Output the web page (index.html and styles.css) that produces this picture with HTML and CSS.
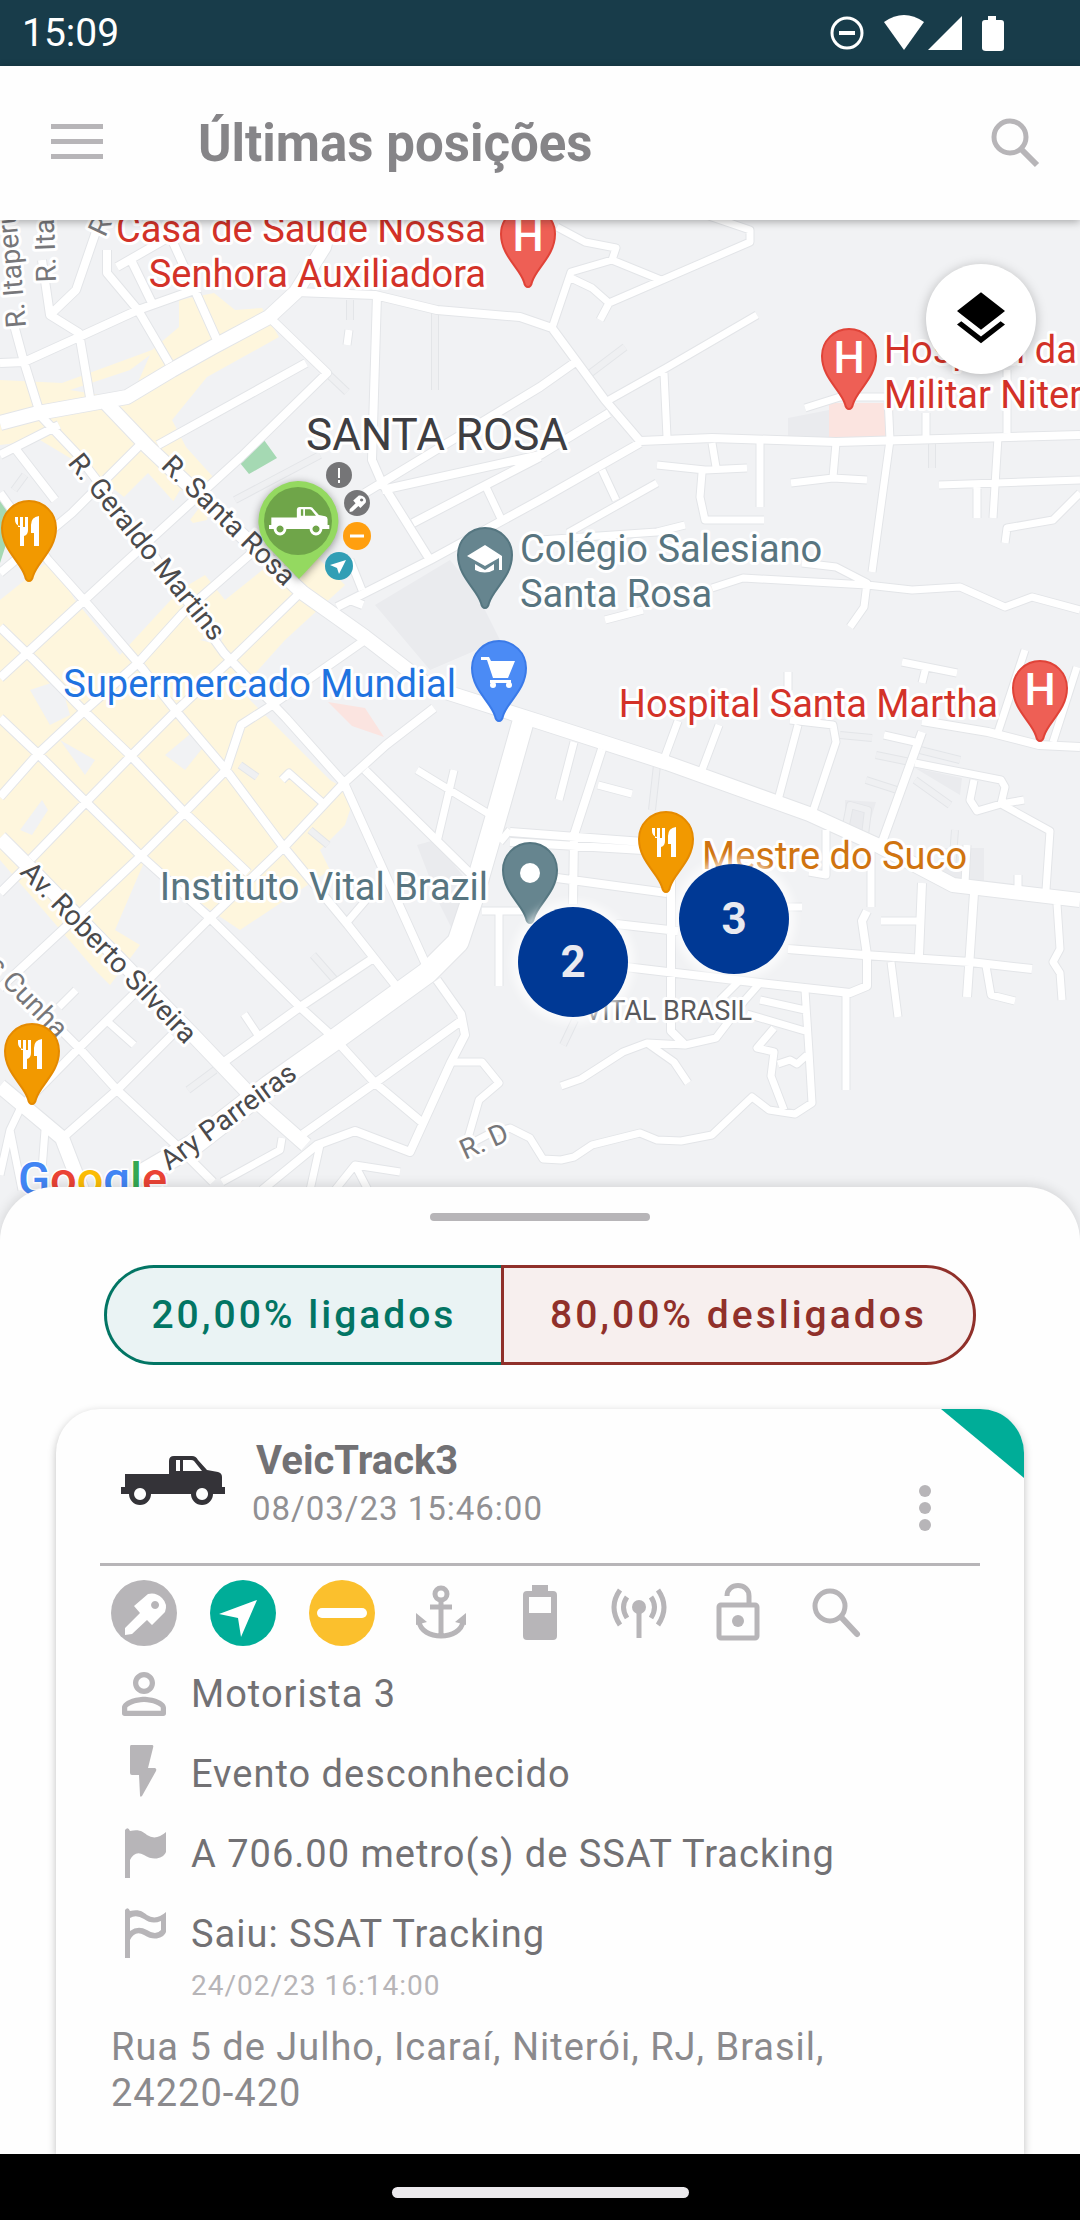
FILE: index.html
```html
<!DOCTYPE html>
<html lang="pt-BR">

<head>
    <meta charset="UTF-8">
    <meta name="viewport" content="width=device-width, initial-scale=1.0">
    <title>Últimas posições</title>
    <link rel="stylesheet" href="styles.css">
</head>

<body>
    <!-- Status bar -->
    <div class="status-bar">
        <span>15:09</span>
        <svg class="status-icons" viewBox="0 0 180 40" aria-hidden="true">
            <circle cx="17" cy="20" r="15" fill="none" stroke="#fff" stroke-width="3" />
            <path d="M9 18h16v4H9z" />
            <path d="M54 9Q74-5 94 9L74 37z" />
            <path d="M98 37L132 3V37z" />
            <path d="M158 3h8v4h5q3 0 3 3v25q0 3-3 3h-15q-4 0-4-3V10q0-3 3-3h3z" />
        </svg>
    </div>

    <!-- App bar -->
    <header class="app-bar">
        <button class="icon-btn" aria-label="Menu">
            <svg width="54" height="54" viewBox="0 0 54 54"><path d="M1 8h52v5H1zM1 23h52v5H1zM1 38h52v5H1z" /></svg>
        </button>
        <h1>Últimas posições</h1>
        <button class="icon-btn" aria-label="Buscar">
            <svg width="54" height="54" viewBox="0 0 54 54"><g fill="none" stroke="#b7b5b8" stroke-width="5"><circle cx="21" cy="21" r="16" /><path d="M32 33l16 16" stroke-width="6" /></g></svg>
        </button>
    </header>

    <!-- Map -->
    <main class="map">
        <svg class="map-canvas" viewBox="0 220 1080 1027" preserveAspectRatio="xMinYMin slice">
            <defs>
                <path id="road-xl" d="M525 715L499 807 472 900 458 942 427 973 337 1038 269 1086 193 1145 140 1176" />
                <path id="road-l" d="M0 423L38 413 127 397 172 370 213 347 269 317 296 292 324 247 332 215M105 402L148 447 303 593 365 637 430 687 540 722 667 763 809 814 877 845 953 885 1080 900M0 838L28 866 193 1035 255 1100 306 1145M0 1086L62 1138 84 1195M14 1200" />
                <path id="road-m" d="M296 292L375 295 437 310 520 317 552 328 605 400 640 441 712 438 836 442 1080 435M0 363L24 362 79 337 138 310 200 288M14 325L24 362 38 407M42 260L50 315 79 333 91 403M100 220L76 290 50 315M107 250V273L138 310 169 363M117 267L185 228M131 260L152 303M172 240L196 293 217 340M269 317L327 373 241 457 117 570 0 678M306 363L158 445M38 413L76 453 150 550 224 653 286 718 344 783 427 967M59 425L0 455M145 440L72 513 0 573M14 447L55 500M0 493L48 560 90 607 138 663 176 711 226 770 282 845 348 925 396 986M0 627L34 660 84 711 131 756 183 811 248 873M0 718L38 754 86 802 141 856 210 918 300 1007 334 1038 375 1083 424 1124M0 797L38 754 84 711 138 663 183 613 255 550M31 859L86 802 131 756 176 711 234 657 303 590M0 893L24 869M0 988L69 924 141 856 186 811 226 770 241 725 269 707 365 640M21 1107L79 1048 148 980 207 921 286 845 344 783 386 745 434 708M59 1141L117 1090 172 1035M45 1014L79 1048 117 1090 176 1145 213 1182M224 1062L300 1007 372 959M365 770L482 885M303 1134L375 1083 461 1021M437 980L461 1014 465 1035 451 1062 410 1152 355 1131 317 1145 262 1190M377 295L372 460 382 483 430 560 337 607M365 493L540 387 574 363M382 490L540 455 609 413M413 523L482 487 540 457M430 560L540 500 640 443M350 600L363 605M602 749L574 835 573 904M510 832L643 842M510 842L643 850M557 878L667 893M616 924L678 931M788 949L864 955 970 962 1032 969M600 964L760 983 850 993 867 986 867 955 862 921 867 911M671 880V1031L685 1045M922 732L881 845M922 721L988 732 1039 745 1080 747M922 883L919 955M974 893L967 997" />
                <path id="road-s" d="M107 1021L134 1045M59 1007L76 990M244 1014L258 1035M417 770L489 814M454 770L437 842M282 780L289 773 324 804M348 921L372 893M451 1062H482L499 1083 479 1100 468 1138M282 1138L280 1150 222 1182M320 1145L310 1190M335 1190L355 1165 400 1172M355 1165L368 1190M0 1175L10 1130 21 1107M10 1130L22 1190M45 1130L42 1170M499 914V986M482 911H523M510 830L500 842M574 742L559 800M598 785L632 794M678 721L664 759M719 725L702 770M798 725L778 800M790 720L833 725 836 742 812 814M884 735L915 742M1025 650L998 732M1077 667L1053 742M915 763L1001 780 1005 787 1001 804 977 811 970 800 974 780M1001 804L1050 831 1046 890M1001 804L1024 800M1057 904L1060 949 1053 962 1060 973 1062 1000M967 845L965 883M1018 875V890M871 845V907M826 830V875L809 872M788 907H802M881 921H919M891 962L898 1017M846 993V1090M986 966L991 995 1015 1001M561 1086L581 1079 623 1052 647 1043 685 1045 716 1038 729 1021 745 1000 760 983M647 1043L674 1062 688 1083M805 990L809 1052 812 1103 795 1114 769 1110 752 1097 712 1135 681 1141 657 1140 640 1133 592 1145 574 1157 561 1160 543 1159 530 1138 510 1128 489 1134 468 1145M774 1028L757 1048 774 1052 771 1076 784 1110M778 1064L790 1060 797 1064 807 1055M747 1014L805 1031M760 1000L805 1010M720 1000L740 980M557 227L585 242 616 248 612 260 571 272 552 328M612 260L661 280M571 278L592 288 609 303 600 320M609 303L750 242V230L709 216M757 315L666 368 609 400M486 487L503 523M664 373L667 437M712 443L716 467M657 465L705 470 747 468M702 473L700 497 705 520 764 520M760 443V507M836 443L833 477M791 483L833 478 867 480M888 397L890 440 872 572M805 408L840 397H888M926 413V437M1007 370V433M998 437L993 518M939 485L1080 480M977 487V518M1005 543L1007 528 1053 520 1080 493M712 588L743 578 867 585 912 590 960 587 1005 607 1032 597 1080 610M802 563L836 567 867 583 864 607 850 627M605 620L643 610M602 470L616 500M568 533L657 483M540 540L657 532 685 525M902 662L957 673M926 667L922 683M788 672V690M349 330L347 345M350 560L362 590" />
                <path id="lane" d="M350 300V320M435 310V390M327 373L347 392M588 375L625 347M932 443V468M235 500L320 455M188 1090L215 1070M313 955L335 980M310 830L328 845M240 765L257 777M840 735L872 738M876 755L910 762M866 780L897 790M920 750L960 760M915 780L950 805M657 765L652 810M955 830L952 870M845 830L850 805 868 810 865 835M563 1045L575 1020M14 490L25 475" />
                <path id="pin" d="M0 53Q-3 53-4 48C-8 34-27 22-27 0A27 27 0 0 1 27 0C27 22 8 34 4 48Q3 53 0 53Z" />
                <path id="food" d="M-14-14h3v10h2v-10h3v10h2v-10h3v13q0 5-4 6V15h-4V-5q-5-1-5-6zM10-15V15H5V2H2V-6Q2-14 10-15z" />
                <path id="key" fill-rule="evenodd" d="M23 26L37 14Q45 12 51 18Q57 24 54 32L41 45 36 40 21 54 14 55V48L29 33ZM44 21a4 4 0 1 0 .1 0Z" />
                <path id="truck" fill-rule="evenodd" d="M4 18H48V5q0-5 5-5H71q4 0 6 4L86 14 97 16q4 1 4 5V31h3v7H92a11 11 0 0 1-22 0H30a11 11 0 0 1-22 0H0V31h4zM55 4V15h4V4zM62 4V15H81L73 5q-1-1-3-1zM19 32a6 6 0 1 0 .1 0zM81 32a6 6 0 1 0 .1 0z" />
            </defs>

            <!-- areas -->
            <path class="area-shop" d="M0 380L62 383 152 350 179 327V300L214 293 235 310 262 308 279 337 207 377 172 420 186 447 213 477 207 520 193 523 148 473 124 497 90 470 40 440 0 445ZM0 600L50 560 75 600 120 655 180 590 205 575 225 600 300 540 345 585 285 640 240 690 330 780 355 795 345 825 320 850 330 870 240 930 210 910 145 860 115 930 140 945 110 985 95 970 0 860Z" />
            <path class="area-plain" d="M30 690L60 680 70 715 50 725ZM60 740L95 760 85 775ZM165 755L195 730 205 745 185 770ZM20 830L42 800 48 810 32 835ZM200 640L225 630 220 645ZM180 490L205 500 160 560 150 540ZM70 390L130 370 150 355 130 400Z" />
            <path class="area-park" d="M240 463L264 440 277 458 249 474ZM0 493L15 517 0 563Z" />
            <path class="area-campus" d="M375 605L450 560 475 590 500 640 430 670ZM417 845L435 840 470 885 455 935 440 905ZM788 418L829 410V437H788ZM942 848H984V885H940ZM845 800L876 802 865 838 845 825ZM915 768L962 778 960 795Z" />
            <path class="area-health" d="M328 702L365 708 384 737 352 726ZM829 403H884L886 437H829Z" />

            <use href="#lane" class="casing lane-w" />
            <use href="#lane" class="lane lane-w" />
            <use href="#road-s" class="casing s-w" />
            <use href="#road-m" class="casing m-w" />
            <use href="#road-l" class="casing l-w" />
            <use href="#road-xl" class="casing xl-w" />
            <use href="#road-s" class="road s-w" />
            <use href="#road-m" class="road m-w" />
            <use href="#road-l" class="road l-w" />
            <use href="#road-xl" class="road xl-w" />

            <!-- street names -->
            <g class="street">
                <text transform="translate(67 463) rotate(51)">R. Geraldo Martins</text>
                <text transform="translate(160 467) rotate(44)">R. Santa Rosa</text>
                <text transform="translate(19 873) rotate(46)">Av. Roberto Silveira</text>
                <text transform="translate(169 1171) rotate(-36)">Ary Parreiras</text>
            </g>
            <g class="street minor">
                <text transform="translate(26 327) rotate(-95)">R. Itaperuna</text>
                <text transform="translate(56 282) rotate(-92)">R. Itaocara</text>
                <text transform="translate(105 238) rotate(-65)">R.</text>
                <text transform="translate(-14 967) rotate(46)">s Cunha</text>
                <text transform="translate(465 1160) rotate(-24)">R. D</text>
            </g>

            <!-- places -->
            <g class="place red">
                <text x="486" y="242" text-anchor="end">Casa de Saúde Nossa</text>
                <text x="486" y="287" text-anchor="end">Senhora Auxiliadora</text>
                <text x="884" y="363">Hospital da</text>
                <text x="884" y="408">Militar Niterói</text>
                <text x="998" y="717" text-anchor="end">Hospital Santa Martha</text>
            </g>
            <g class="place slate">
                <text x="520" y="562">Colégio Salesiano</text>
                <text x="520" y="607">Santa Rosa</text>
                <text x="488" y="900" text-anchor="end">Instituto Vital Brazil</text>
            </g>
            <text class="place blue" x="456" y="697" text-anchor="end">Supermercado Mundial</text>
            <text class="place orange" x="702" y="869">Mestre do Suco</text>
            <text class="place district" x="306" y="450">SANTA ROSA</text>
            <text class="place area-name" x="585" y="1020">VITAL BRASIL</text>

            <!-- pins -->
            <g fill="#ee5f55" stroke="#e04338" stroke-width="2">
                <use href="#pin" x="528" y="234" />
                <use href="#pin" x="849" y="356" />
                <use href="#pin" x="1040" y="688" />
            </g>
            <g class="pin-letter">
                <text x="528" y="251">H</text>
                <text x="849" y="373">H</text>
                <text x="1040" y="705">H</text>
            </g>
            <g fill="#f29900" stroke="#e58a00" stroke-width="2">
                <use href="#pin" x="29" y="528" />
                <use href="#pin" x="32" y="1051" />
                <use href="#pin" x="666" y="839" />
            </g>
            <g fill="#fff">
                <use href="#food" x="29" y="531" />
                <use href="#food" x="32" y="1054" />
                <use href="#food" x="666" y="842" />
            </g>
            <g fill="#66858f" stroke="#557680" stroke-width="2">
                <use href="#pin" x="485" y="555" />
                <use href="#pin" x="530" y="870" />
            </g>
            <circle cx="530" cy="873" r="10" fill="#fff" />
            <path fill="#fff" d="M467 556L485 545 502 556V570H499V558L485 566ZM475 564L485 570 494 564V570Q485 575 475 570Z" />
            <use href="#pin" x="499" y="668" fill="#4b8bf5" stroke="#3a7ae8" stroke-width="2" />
            <path fill="#fff" d="M481 657H489L491 661H515L508 678H493L487 660H481ZM490 680H511V683H490Z" />
            <circle cx="493" cy="685" r="3" fill="#fff" />
            <circle cx="509" cy="685" r="3" fill="#fff" />

            <!-- vehicle -->
            <path class="vehicle-pin" d="M299 579L273 552A40 40 0 1 1 325 551Z" />
            <circle cx="298" cy="521" r="34" fill="#6fa549" />
            <use href="#truck" fill="#fff" transform="translate(269 507) scale(.58)" />
            <g>
                <circle cx="339" cy="475" r="13" fill="#757577" />
                <path d="M339 468V478M339 480V483" stroke="#fff" stroke-width="2" />
                <circle cx="357" cy="503" r="13" fill="#757577" />
                <use href="#key" fill="#fff" transform="translate(344 490) scale(.4)" />
                <circle cx="357" cy="536" r="14" fill="#ff9f0f" />
                <path d="M350 536H364" stroke="#fff" stroke-width="3" />
                <circle cx="339" cy="566" r="14" fill="#319eb5" />
                <path d="M346 560L339 574 337 568 330 565Z" fill="#fff" />
            </g>

            <text class="google" x="18" y="1195"><tspan fill="#4285f4">G</tspan><tspan fill="#ea4335">o</tspan><tspan fill="#fbbc05">o</tspan><tspan fill="#4285f4">g</tspan><tspan fill="#34a853">l</tspan><tspan fill="#ea4335">e</tspan></text>
        </svg>

        <button class="layers-btn" aria-label="Camadas">
            <svg width="64" height="64" viewBox="0 0 24 24"><path d="M11.99 18.54l-7.37-5.73L3 14.07l9 7 9-7-1.63-1.27-7.38 5.74zM12 16l7.36-5.73L21 9l-9-7-9 7 1.63 1.27L12 16z" /></svg>
        </button>
        <button class="cluster cluster-2">2</button>
        <button class="cluster cluster-3">3</button>
    </main>

    <!-- Bottom sheet -->
    <section class="sheet">
        <div class="handle"></div>

        <div class="totals">
            <button class="total on">20,00% ligados</button>
            <button class="total off">80,00% desligados</button>
        </div>

        <article class="card">
            <div class="corner"></div>
            <div class="card-header">
                <svg class="truck" width="104" height="50" viewBox="0 0 104 50"><use href="#truck" /></svg>
                <div class="vehicle">
                    <h2>VeicTrack3</h2>
                    <time>08/03/23 15:46:00</time>
                </div>
                <button class="more" aria-label="Mais opções">
                    <svg width="12" height="46" viewBox="0 0 12 46"><circle cx="6" cy="6" r="6" /><circle cx="6" cy="23" r="6" /><circle cx="6" cy="40" r="6" /></svg>
                </button>
            </div>

            <div class="states">
                <svg viewBox="0 0 66 66"><circle cx="33" cy="33" r="33" /><use href="#key" fill="#fff" /></svg>
                <svg viewBox="0 0 66 66"><circle cx="33" cy="33" r="33" fill="#00ad98" /><path fill="#fff" d="M47 20L31 57 28 38 9 34Z" /></svg>
                <svg viewBox="0 0 66 66"><circle cx="33" cy="33" r="33" fill="#fbc02d" /><rect x="8" y="28" width="50" height="10" rx="5" fill="#fff" /></svg>
                <svg viewBox="0 0 66 66"><g fill="none" stroke="#b7b5b8" stroke-width="5"><circle cx="33" cy="14" r="6" /><path d="M33 20V57M22 27H44M11 41C13 61 53 61 55 41" /></g><path d="M8 33L19 42 8 45ZM58 33L47 42 58 45Z" /></svg>
                <svg viewBox="0 0 66 66"><path fill-rule="evenodd" d="M25 5H41V11H46Q50 11 50 15V56Q50 60 46 60H20Q16 60 16 56V15Q16 11 20 11H25ZM22 17V33H44V17Z" /></svg>
                <svg viewBox="0 0 66 66"><circle cx="33" cy="27" r="7" /><g fill="none" stroke="#b7b5b8" stroke-width="5"><path d="M33 27V58M45 17Q52 27 45 38M21 17Q14 27 21 38M52 10Q64 27 52 45M14 10Q2 27 14 45" /></g></svg>
                <svg viewBox="0 0 66 66"><g fill="none" stroke="#b7b5b8" stroke-width="5"><rect x="14" y="25" width="38" height="33" rx="2" /><path d="M22 16C22 2 44 2 44 16V24" /></g><circle cx="33" cy="41" r="6" /></svg>
                <svg viewBox="0 0 66 66"><g fill="none" stroke="#b7b5b8" stroke-width="5"><circle cx="26" cy="26" r="15" /><path d="M38 38L53 54" stroke-width="6" stroke-linecap="round" /></g></svg>
            </div>

            <ul class="details">
                <li>
                    <svg viewBox="0 0 24 24"><path d="M12 5.900a2.100 2.100 0 1 1 0 4.200 2.100 2.100 0 0 1 0-4.200m0 9c2.970 0 6.100 1.460 6.100 2.100v1.100H5.900V17c0-.64 3.130-2.100 6.100-2.100M12 4C9.790 4 8 5.790 8 8s1.790 4 4 4 4-1.790 4-4-1.790-4-4-4zm0 9c-2.670 0-8 1.340-8 4v2q0 1 1 1h14q1 0 1-1v-2c0-2.660-5.330-4-8-4z" /></svg>
                    <span>Motorista 3</span>
                </li>
                <li>
                    <svg viewBox="0 0 66 66"><path d="M20 4H41Q43 4 42 7L37 27H44Q46 28 45 30L31 55Q29 57 29 54L28 34H21Q19 34 19 32V6Q19 4 20 4Z" /></svg>
                    <span>Evento desconhecido</span>
                </li>
                <li>
                    <svg viewBox="0 0 66 66"><path d="M14 9Q17 5 19 10C29 8 32 11 36 14Q45 20 55 11V31C52 38 42 40 33 34Q24 29 19 39V57H14Z" /></svg>
                    <span>A 706.00 metro(s) de SSAT Tracking</span>
                </li>
                <li>
                    <svg viewBox="0 0 66 66"><path fill-rule="evenodd" d="M14 9Q17 5 19 10C29 8 32 11 36 14Q45 20 55 11V31C52 38 42 40 33 34Q24 29 19 39V57H14ZM19 17V30Q27 24 36 29Q45 35 50 29V20Q41 24 33 18Q25 13 19 17Z" /></svg>
                    <span>Saiu: SSAT Tracking</span>
                </li>
            </ul>
            <time class="left-at">24/02/23 16:14:00</time>
            <p class="address">Rua 5 de Julho, Icaraí, Niterói, RJ, Brasil, 24220-420</p>
        </article>
    </section>

    <!-- Navigation bar -->
    <div class="nav-bar"><span></span></div>
</body>

</html>
```
FILE: styles.css
```css
* {
    box-sizing: border-box;
}

body {
    display: flex;
    flex-direction: column;
    min-height: 100vh;
    margin: 0;
    font-family: Roboto, 'Liberation Sans', sans-serif;
    background-color: #fefefe;
    color: #727174;
}

button {
    padding: 0;
    border: none;
    background: none;
    font-family: inherit;
    cursor: pointer;
}

svg {
    display: block;
}

h1,
h2,
p,
ul {
    margin: 0;
    padding: 0;
}

/* Status bar */
.status-bar {
    display: flex;
    align-items: center;
    justify-content: space-between;
    height: 66px;
    padding: 0 70px 0 22px;
    background-color: #183c4a;
    color: #fff;
    font-size: 39px;
}

.status-icons {
    width: 180px;
    height: 40px;
    fill: #fff;
}

/* App bar */
.app-bar {
    position: relative;
    z-index: 2;
    display: flex;
    align-items: center;
    height: 154px;
    padding: 0 37px 0 50px;
    background-color: #fefefe;
    box-shadow: 0 2px 8px rgba(0, 0, 0, 0.3);
}

.app-bar h1 {
    flex: 1;
    margin-left: 94px;
    color: #868588;
    font-size: 51px;
    font-weight: bold;
}

.icon-btn {
    fill: #b7b5b8;
}

/* Map */
.map {
    position: relative;
    flex: 1;
    min-height: 600px;
    overflow: hidden;
    background-color: #f1f2f4;
}

.map-canvas {
    position: absolute;
    width: 100%;
    height: 100%;
}

.area-shop {
    fill: #fef6dd;
}

.area-plain {
    fill: #f1f2f4;
}

.area-park {
    fill: #a5d9b3;
}

.area-campus {
    fill: #eaebee;
}

.area-health {
    fill: #fbe4e0;
}

.road,
.casing,
.lane {
    fill: none;
    stroke-linejoin: round;
    stroke: #fff;
}

.casing {
    stroke: #e3e5e8;
}

.lane {
    stroke: #eff0f2;
}

.road.s-w { stroke-width: 7px; }
.casing.s-w { stroke-width: 9px; }
.road.m-w { stroke-width: 8px; }
.casing.m-w { stroke-width: 10px; }
.road.l-w { stroke-width: 14px; }
.casing.l-w { stroke-width: 16px; }
.road.xl-w { stroke-width: 21px; }
.casing.xl-w { stroke-width: 23px; }
.lane.lane-w { stroke-width: 6px; }
.casing.lane-w { stroke-width: 8px; }

.street,
.place {
    paint-order: stroke;
    stroke: #fff;
    stroke-width: 6px;
    stroke-linejoin: round;
}

.street {
    fill: #4a4a4c;
    font-size: 28px;
}

.street.minor {
    fill: #77777a;
}

.place {
    font-size: 38px;
}

.red { fill: #d33228; }
.slate { fill: #587580; }
.blue { fill: #1f73e0; }
.orange { fill: #d07410; }

.district {
    fill: #3e3e42;
    font-size: 44px;
}

.area-name {
    fill: #59595c;
    font-size: 27px;
}

.pin-letter {
    fill: #fff;
    font-size: 44px;
    font-weight: 500;
    text-anchor: middle;
}

.vehicle-pin {
    fill: #94d960;
    filter: drop-shadow(0 2px 4px rgba(0, 0, 0, 0.4));
}

.google {
    font-size: 47px;
    font-weight: 500;
    paint-order: stroke;
    stroke: #fff;
    stroke-width: 3px;
}

.layers-btn {
    position: absolute;
    top: 44px;
    right: 44px;
    display: flex;
    align-items: center;
    justify-content: center;
    width: 110px;
    height: 110px;
    border-radius: 50%;
    background-color: #fff;
    box-shadow: 0 2px 12px rgba(0, 0, 0, 0.25);
}

.cluster {
    position: absolute;
    width: 110px;
    height: 110px;
    border-radius: 50%;
    background-color: #003995;
    box-shadow: 0 0 10px 6px rgba(255, 255, 255, 0.7);
    color: #e9eaf0;
    font-size: 44px;
    font-weight: bold;
}

.cluster-2 {
    top: 687px;
    left: 518px;
}

.cluster-3 {
    top: 644px;
    left: 679px;
}

/* Bottom sheet */
.sheet {
    position: relative;
    margin-top: -60px;
    padding: 26px 56px 0;
    border-radius: 54px 54px 0 0;
    background-color: #fefefe;
    box-shadow: 0 -2px 12px rgba(0, 0, 0, 0.12);
}

.handle {
    width: 220px;
    height: 8px;
    margin: 0 auto;
    border-radius: 4px;
    background-color: #b7b5b8;
}

.totals {
    display: flex;
    margin: 44px 48px;
}

.total {
    height: 100px;
    border: 3px solid;
    font-size: 39px;
    font-weight: 500;
    letter-spacing: 3px;
}

.total.on {
    flex: 398;
    border-right: none;
    border-radius: 50px 0 0 50px;
    background-color: #eaf3f4;
    color: #027564;
}

.total.off {
    flex: 474;
    border-radius: 0 50px 50px 0;
    background-color: #f7efee;
    color: #90302a;
}

/* Vehicle card */
.card {
    position: relative;
    padding: 0 44px 38px;
    border-radius: 44px 44px 0 0;
    background-color: #fefefe;
    box-shadow: 0 3px 8px rgba(0, 0, 0, 0.25);
}

.corner {
    position: absolute;
    top: 0;
    right: 0;
    width: 83px;
    height: 69px;
    border-top-right-radius: 44px;
    background-color: #00ad98;
    clip-path: polygon(0 0, 100% 0, 100% 100%);
}

.card-header {
    display: flex;
    align-items: flex-start;
    height: 157px;
    padding: 28px 49px 0 21px;
    border-bottom: 3px solid #b7b5b8;
}

.truck {
    margin-top: 19px;
    fill: #343338;
}

.vehicle {
    flex: 1;
    margin-left: 27px;
}

.vehicle h2 {
    padding-left: 4px;
    font-size: 40px;
    line-height: 48px;
}

.vehicle time {
    display: block;
    color: #919093;
    font-size: 33px;
    line-height: 48px;
    letter-spacing: 1px;
}

.more {
    margin-top: 48px;
    fill: #b7b5b8;
}

.states {
    display: flex;
    gap: 33px;
    padding: 14px 11px 8px;
}

.states svg,
.details svg {
    flex: none;
    width: 66px;
    height: 66px;
    fill: #b7b5b8;
}

.details {
    padding-left: 11px;
    list-style: none;
}

.details li {
    display: flex;
    align-items: center;
    gap: 14px;
    height: 80px;
    font-size: 38px;
    letter-spacing: 1px;
}

.left-at {
    display: block;
    padding-left: 91px;
    color: #b7b5b8;
    font-size: 28px;
    line-height: 24px;
    letter-spacing: 1px;
}

.address {
    padding: 26px 100px 0 11px;
    color: #8b8a8d;
    font-size: 38px;
    line-height: 46px;
    letter-spacing: 1px;
}

/* Navigation bar */
.nav-bar {
    display: flex;
    justify-content: center;
    height: 66px;
    padding-top: 33px;
    background-color: #000;
}

.nav-bar span {
    width: 297px;
    height: 11px;
    border-radius: 6px;
    background-color: #eceaed;
}
```
